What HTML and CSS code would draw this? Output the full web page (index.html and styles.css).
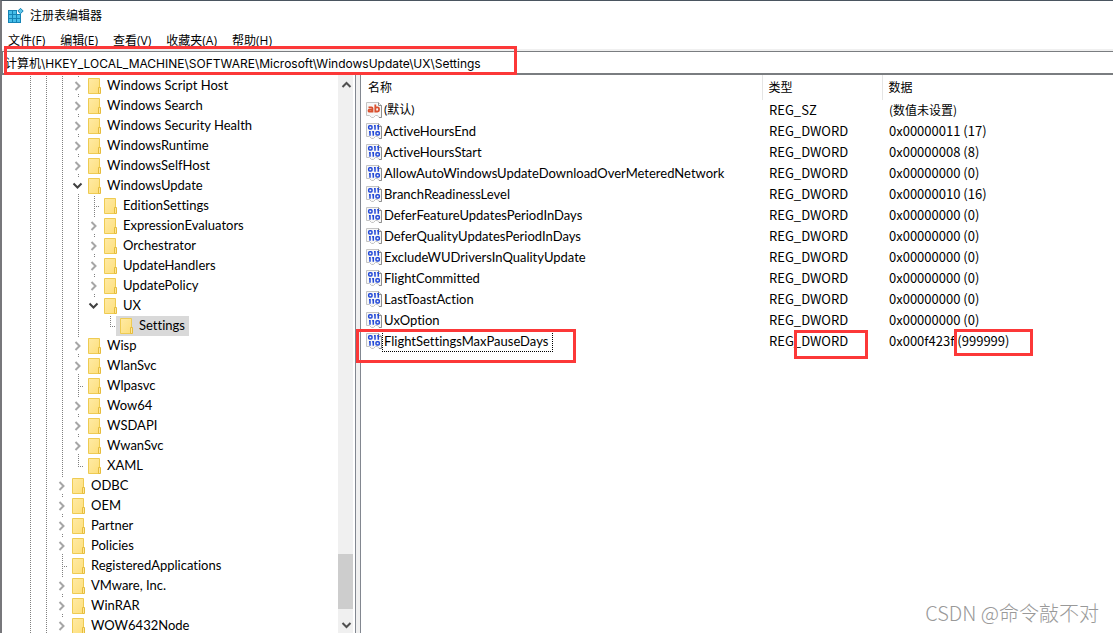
FILE: index.html
```html
<!DOCTYPE html>
<html lang="zh-CN">
	<head>
		<meta charset="UTF-8" />
		<meta name="viewport" content="width=device-width, initial-scale=1.0" />
		<title>注册表编辑器</title>
		<link rel="stylesheet" href="styles.css">
	</head>
	<body>
		<!-- 公用图标 -->
		<svg class="defs" width="0" height="0" aria-hidden="true">
			<defs>
				<linearGradient id="paper" x1="0" y1="0" x2="1" y2="1">
					<stop offset="0" stop-color="#ffeaa4" />
					<stop offset="1" stop-color="#fddf7c" />
				</linearGradient>
				<symbol id="folder" viewBox="0 0 16 16">
					<path d="M2.5 .5h11v15h-11z" fill="url(#paper)" stroke="#eecb52" />
					<path d="M12.5 9.5h2v6h-2z" fill="#ffe79a" stroke="#e6bd3c" />
				</symbol>
				<symbol id="right" viewBox="0 0 14 16">
					<path d="M5.500 4l4 4-4 4" fill="none" stroke="#a6a6a6" stroke-width="2" />
				</symbol>
				<symbol id="down" viewBox="0 0 14 16">
					<path d="M3.500 5.500l4 4 4-4" fill="none" stroke="#404040" stroke-width="2" />
				</symbol>
				<symbol id="page" viewBox="0 0 16 16">
					<path d="M.5 .5h12l3 3v12h-2.500l-1.500-2h-2l-2 2h-2l-2-2h-3z" fill="#f7f7f7" stroke="#c4c4c4" />
					<path d="M12.500 .5v3h3v12h-2.500" fill="none" stroke="#8e8e8e" />
				</symbol>
				<symbol id="binary" viewBox="0 0 16 16">
					<use href="#page" />
					<g fill="none" stroke="#2349d8" stroke-width="1.500">
						<rect x="2.700" y="2.700" width="3.300" height="3.300" rx="1" />
						<path d="M9 2v4.800M12.300 2v4.800" />
						<path d="M4 8v4.800M7.300 8v4.800" />
						<rect x="10" y="8.700" width="3.300" height="3.300" rx="1" />
						<path d="M8 2.700h1M11.300 2.700h1M3 8.700h1M6.300 8.700h1" />
					</g>
				</symbol>
				<symbol id="string" viewBox="0 0 16 16">
					<use href="#page" />
					<g fill="none" stroke="#d9502e" stroke-width="1.800">
						<path d="M2.500 5.300h3q1 0 1 1v4.200M6.500 7.700h-3q-1 0-1 1t1 1h2l1-1" />
						<path d="M9.300 2.500v8M9.300 6.300l1-1h1.200q1.500 0 1.500 1.500v1.200q0 1.500-1.500 1.500h-2.200" />
					</g>
				</symbol>
			</defs>
		</svg>

		<div class="window">
			<header class="title">
				<svg class="logo" width="16" height="16" viewBox="0 0 16 16" aria-hidden="true">
					<path d="M0 2h9v4h4v9H0z" fill="#1583b5" />
					<path d="M1 3h3v3H1zM5 3h3v3H5zM1 7h3v3H1zM5 7h3v3H5zM9 7h3v3H9zM1 11h3v3H1zM5 11h3v3H5zM9 11h3v3H9z" fill="#46bde8" />
					<path d="M12.500 .3l2.700 2.700-2.700 2.700L9.800 3z" fill="#5fc6ea" stroke="#1583b5" />
				</svg>
				<h1>注册表编辑器</h1>
			</header>
			<nav class="menu">
				<button type="button">文件(<u>F</u>)</button>
				<button type="button">编辑(<u>E</u>)</button>
				<button type="button">查看(<u>V</u>)</button>
				<button type="button">收藏夹(<u>A</u>)</button>
				<button type="button">帮助(<u>H</u>)</button>
			</nav>
			<input class="address" type="text" aria-label="地址" value="计算机\HKEY_LOCAL_MACHINE\SOFTWARE\Microsoft\WindowsUpdate\UX\Settings" />

			<main class="main">
				<div class="left">
					<ul class="tree">
						<li class="open"><ul><li class="open"><ul>
							<li>
								<ul>
									<li><div class="row"><svg class="arrow"><use href="#right" /></svg><span class="label"><svg class="icon"><use href="#folder" /></svg>Windows Script Host</span></div></li>
									<li><div class="row"><svg class="arrow"><use href="#right" /></svg><span class="label"><svg class="icon"><use href="#folder" /></svg>Windows Search</span></div></li>
									<li><div class="row"><svg class="arrow"><use href="#right" /></svg><span class="label"><svg class="icon"><use href="#folder" /></svg>Windows Security Health</span></div></li>
									<li><div class="row"><svg class="arrow"><use href="#right" /></svg><span class="label"><svg class="icon"><use href="#folder" /></svg>WindowsRuntime</span></div></li>
									<li><div class="row"><svg class="arrow"><use href="#right" /></svg><span class="label"><svg class="icon"><use href="#folder" /></svg>WindowsSelfHost</span></div></li>
									<li>
										<div class="row"><svg class="arrow"><use href="#down" /></svg><span class="label"><svg class="icon"><use href="#folder" /></svg>WindowsUpdate</span></div>
										<ul>
											<li><div class="row"><span class="leaf"></span><span class="label"><svg class="icon"><use href="#folder" /></svg>EditionSettings</span></div></li>
											<li><div class="row"><svg class="arrow"><use href="#right" /></svg><span class="label"><svg class="icon"><use href="#folder" /></svg>ExpressionEvaluators</span></div></li>
											<li><div class="row"><svg class="arrow"><use href="#right" /></svg><span class="label"><svg class="icon"><use href="#folder" /></svg>Orchestrator</span></div></li>
											<li><div class="row"><svg class="arrow"><use href="#right" /></svg><span class="label"><svg class="icon"><use href="#folder" /></svg>UpdateHandlers</span></div></li>
											<li><div class="row"><svg class="arrow"><use href="#right" /></svg><span class="label"><svg class="icon"><use href="#folder" /></svg>UpdatePolicy</span></div></li>
											<li>
												<div class="row"><svg class="arrow"><use href="#down" /></svg><span class="label"><svg class="icon"><use href="#folder" /></svg>UX</span></div>
												<ul>
													<li><div class="row"><span class="leaf"></span><span class="label selected"><svg class="icon"><use href="#folder" /></svg>Settings</span></div></li>
												</ul>
											</li>
										</ul>
									</li>
									<li><div class="row"><svg class="arrow"><use href="#right" /></svg><span class="label"><svg class="icon"><use href="#folder" /></svg>Wisp</span></div></li>
									<li><div class="row"><svg class="arrow"><use href="#right" /></svg><span class="label"><svg class="icon"><use href="#folder" /></svg>WlanSvc</span></div></li>
									<li><div class="row"><span class="leaf"></span><span class="label"><svg class="icon"><use href="#folder" /></svg>Wlpasvc</span></div></li>
									<li><div class="row"><svg class="arrow"><use href="#right" /></svg><span class="label"><svg class="icon"><use href="#folder" /></svg>Wow64</span></div></li>
									<li><div class="row"><svg class="arrow"><use href="#right" /></svg><span class="label"><svg class="icon"><use href="#folder" /></svg>WSDAPI</span></div></li>
									<li><div class="row"><svg class="arrow"><use href="#right" /></svg><span class="label"><svg class="icon"><use href="#folder" /></svg>WwanSvc</span></div></li>
									<li><div class="row"><span class="leaf"></span><span class="label"><svg class="icon"><use href="#folder" /></svg>XAML</span></div></li>
								</ul>
							</li>
							<li><div class="row"><svg class="arrow"><use href="#right" /></svg><span class="label"><svg class="icon"><use href="#folder" /></svg>ODBC</span></div></li>
							<li><div class="row"><svg class="arrow"><use href="#right" /></svg><span class="label"><svg class="icon"><use href="#folder" /></svg>OEM</span></div></li>
							<li><div class="row"><svg class="arrow"><use href="#right" /></svg><span class="label"><svg class="icon"><use href="#folder" /></svg>Partner</span></div></li>
							<li><div class="row"><svg class="arrow"><use href="#right" /></svg><span class="label"><svg class="icon"><use href="#folder" /></svg>Policies</span></div></li>
							<li><div class="row"><span class="leaf"></span><span class="label"><svg class="icon"><use href="#folder" /></svg>RegisteredApplications</span></div></li>
							<li><div class="row"><svg class="arrow"><use href="#right" /></svg><span class="label"><svg class="icon"><use href="#folder" /></svg>VMware, Inc.</span></div></li>
							<li><div class="row"><svg class="arrow"><use href="#right" /></svg><span class="label"><svg class="icon"><use href="#folder" /></svg>WinRAR</span></div></li>
							<li><div class="row"><svg class="arrow"><use href="#right" /></svg><span class="label"><svg class="icon"><use href="#folder" /></svg>WOW6432Node</span></div></li>
						</ul></li></ul></li>
					</ul>
					<div class="scroll">
						<button type="button" aria-label="向上滚动"><svg width="14" height="16" viewBox="0 0 14 16"><path d="M3.500 11l4-4 4 4" fill="none" stroke="#505050" stroke-width="2" /></svg></button>
						<div class="track"><div class="thumb"></div></div>
						<button type="button" aria-label="向下滚动"><svg width="14" height="16" viewBox="0 0 14 16"><path d="M3.500 7l4 4 4-4" fill="none" stroke="#505050" stroke-width="2" /></svg></button>
					</div>
				</div>
				<div class="splitter"></div>
				<div class="right">
					<table class="values">
						<colgroup>
							<col class="col-name" />
							<col class="col-type" />
							<col />
						</colgroup>
						<thead>
							<tr><th>名称</th><th>类型</th><th>数据</th></tr>
						</thead>
						<tbody>
							<tr><td><span class="name"><svg class="icon"><use href="#string" /></svg><span class="cn">(默认)</span></span></td><td>REG_SZ</td><td class="cn">(数值未设置)</td></tr>
							<tr><td><span class="name"><svg class="icon"><use href="#binary" /></svg><span>ActiveHoursEnd</span></span></td><td>REG_DWORD</td><td>0x00000011 (17)</td></tr>
							<tr><td><span class="name"><svg class="icon"><use href="#binary" /></svg><span>ActiveHoursStart</span></span></td><td>REG_DWORD</td><td>0x00000008 (8)</td></tr>
							<tr><td><span class="name"><svg class="icon"><use href="#binary" /></svg><span>AllowAutoWindowsUpdateDownloadOverMeteredNetwork</span></span></td><td>REG_DWORD</td><td>0x00000000 (0)</td></tr>
							<tr><td><span class="name"><svg class="icon"><use href="#binary" /></svg><span>BranchReadinessLevel</span></span></td><td>REG_DWORD</td><td>0x00000010 (16)</td></tr>
							<tr><td><span class="name"><svg class="icon"><use href="#binary" /></svg><span>DeferFeatureUpdatesPeriodInDays</span></span></td><td>REG_DWORD</td><td>0x00000000 (0)</td></tr>
							<tr><td><span class="name"><svg class="icon"><use href="#binary" /></svg><span>DeferQualityUpdatesPeriodInDays</span></span></td><td>REG_DWORD</td><td>0x00000000 (0)</td></tr>
							<tr><td><span class="name"><svg class="icon"><use href="#binary" /></svg><span>ExcludeWUDriversInQualityUpdate</span></span></td><td>REG_DWORD</td><td>0x00000000 (0)</td></tr>
							<tr><td><span class="name"><svg class="icon"><use href="#binary" /></svg><span>FlightCommitted</span></span></td><td>REG_DWORD</td><td>0x00000000 (0)</td></tr>
							<tr><td><span class="name"><svg class="icon"><use href="#binary" /></svg><span>LastToastAction</span></span></td><td>REG_DWORD</td><td>0x00000000 (0)</td></tr>
							<tr><td><span class="name"><svg class="icon"><use href="#binary" /></svg><span>UxOption</span></span></td><td>REG_DWORD</td><td>0x00000000 (0)</td></tr>
							<tr><td><span class="name"><svg class="icon"><use href="#binary" /></svg><span class="focus">FlightSettingsMaxPauseDays</span></span></td><td>REG_DWORD</td><td>0x000f423f (999999)</td></tr>
						</tbody>
					</table>
				</div>
			</main>
		</div>

		<!-- 红框标注 -->
		<div class="mark mark-path"></div>
		<div class="mark mark-name"></div>
		<div class="mark mark-type"></div>
		<div class="mark mark-data"></div>
		<div class="watermark">CSDN @命令敲不对</div>
	</body>
</html>
```
FILE: styles.css
```css
* {
	margin: 0;
	padding: 0;
	box-sizing: border-box;
}
body {
	height: 100vh;
	overflow: hidden;
	position: relative;
	background-color: #fff;
	color: #000;
	font: 13px/18px Lato, "Noto Sans CJK SC", sans-serif;
	font-variant-ligatures: none;
}
button,
input {
	font: inherit;
	color: inherit;
	border: none;
	background: none;
}
ul {
	list-style: none;
}
.defs {
	position: absolute;
}
.window {
	height: 100vh;
	display: flex;
	flex-direction: column;
	border-top: 1px solid #4a5560;
	border-left: 2px solid #77777b;
}

/* 标题和菜单 */
.title {
	display: flex;
	align-items: center;
	gap: 6px;
	height: 29px;
	padding-left: 6px;
}
.title h1 {
	font-size: 12px;
	font-weight: normal;
}
.menu {
	display: flex;
	gap: 15px;
	height: 21px;
	padding: 2px 0 0 6px;
	border-bottom: 2px solid #f0f0f0;
}
.menu button {
	font: 12px/18px "Open Sans", "Noto Sans CJK SC", sans-serif;
}
.address {
	width: 100%;
	height: 24px;
	padding: 0 0 1px 2px;
	border: 1px solid #7a7d80;
	border-bottom-width: 2px;
	border-right: none;
	outline: none;
	font: 12px/18px Inter, "Noto Sans CJK SC", sans-serif;
}

/* 主体 */
.main {
	flex: 1;
	display: flex;
	min-height: 0;
}
.left {
	flex: 0 0 354px;
	display: flex;
	border-right: 1px solid #828790;
}
.tree {
	flex: 1;
	overflow: hidden;
	padding: 1px 0 0 20px;
}
.tree ul {
	padding-left: 16px;
}
.tree li {
	position: relative;
}
/* 竖直虚线 */
.tree li::before {
	content: "";
	position: absolute;
	top: 0;
	bottom: 0;
	left: 8px;
	width: 1px;
	background: repeating-linear-gradient(#808080 0 1px, transparent 1px 2px);
}
.tree ul ul ul li:last-child::before {
	bottom: auto;
	height: 10px;
}
.row {
	position: relative;
	display: flex;
	align-items: center;
	height: 20px;
	white-space: nowrap;
}
.arrow {
	width: 14px;
	height: 16px;
	background-color: #fff;
}
.leaf {
	width: 14px;
	height: 1px;
	background: repeating-linear-gradient(90deg, #808080 0 1px, transparent 1px 2px) 8px 0 no-repeat;
}
.label {
	display: flex;
	align-items: flex-start;
	gap: 5px;
	height: 20px;
	padding: 0 4px 0 2px;
}
.label .icon {
	margin-top: 2px;
}
.selected {
	background-color: #d9d9d9;
}
.icon {
	flex: none;
	width: 16px;
	height: 16px;
}
.scroll {
	flex: 0 0 17px;
	display: flex;
	flex-direction: column;
	padding-right: 2px;
	background: linear-gradient(#f0f0f0, #f0f0f0) 0 0 / 15px 100% no-repeat;
}
.scroll button {
	height: 18px;
	line-height: 0;
}
.track {
	flex: 1;
	display: flex;
	flex-direction: column;
	justify-content: flex-end;
	padding-bottom: 6px;
}
.thumb {
	height: 55px;
	background-color: #cdcdcd;
}
.splitter {
	width: 5px;
	background-color: #f0f0f0;
	border-right: 1px solid #828790;
}

/* 右侧列表 */
.right {
	flex: 1;
	min-width: 0;
	overflow: hidden;
}
.values {
	width: 100%;
	table-layout: fixed;
	border-collapse: collapse;
	white-space: nowrap;
}
.col-name {
	width: 401px;
}
.col-type {
	width: 120px;
}
.values th {
	height: 25px;
	padding-left: 6px;
	font-size: 12px;
	font-weight: normal;
	text-align: left;
	border-right: 1px solid #e5e5e5;
}
.values th:first-child {
	padding-left: 7px;
}
.values th:last-child {
	border-right: none;
}
.values td {
	height: 21px;
	padding: 0 0 2px 7px;
	font-family: "Noto Sans CJK SC", sans-serif;
}
.values td:first-child {
	padding: 0 0 0 5px;
	font-family: Lato, "Noto Sans CJK SC", sans-serif;
}
.values .cn {
	font-size: 12px;
}
.name {
	display: flex;
	align-items: flex-start;
	height: 21px;
}
.name .icon {
	margin-top: 2px;
}
.name span {
	padding: 0 4px 0 2px;
	line-height: 20px;
}
.name .focus {
	padding: 0 4px 0 1px;
	border: 1px dotted #000;
	border-top: none;
}

/* 标注 */
.mark {
	position: absolute;
	border: 3px solid #fc3838;
}
.mark-path {
	left: 4px;
	top: 46px;
	width: 513px;
	height: 29px;
}
.mark-name {
	left: 356px;
	top: 329px;
	width: 220px;
	height: 34px;
}
.mark-type {
	left: 794px;
	top: 330px;
	width: 74px;
	height: 29px;
}
.mark-data {
	left: 954px;
	top: 329px;
	width: 79px;
	height: 27px;
}
.watermark {
	position: absolute;
	right: 14px;
	bottom: 8px;
	color: #999;
	font: 300 20px/24px "Noto Sans CJK SC", sans-serif;
}
```
